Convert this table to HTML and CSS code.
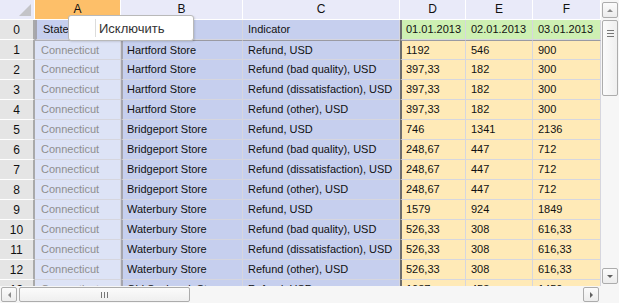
FILE: index.html
```html
<!DOCTYPE html>
<html lang="ru">
<head>
    <meta charset="UTF-8">
    <title>Таблица</title>
    <link rel="stylesheet" href="styles.css">
</head>
<body>
<div class="sheet">
    <div class="sheet-top">
        <div class="viewport">
            <div class="grid">
                <div class="corner"><span class="corner-mark"></span></div>
                <div class="col-head sel div-left">A</div>
                <div class="col-head div-left">B</div>
                <div class="col-head">C</div>
                <div class="col-head div-left">D</div>
                <div class="col-head">E</div>
                <div class="col-head">F</div>
            </div>
            <div class="grid" id="rows"></div>
            <div class="context-menu">
                <div class="menu-icon"></div>
                <div class="menu-text">Исключить</div>
            </div>
        </div>
        <div class="vscroll">
            <div class="sb-btn"><span class="arr up"></span></div>
            <div class="sb-thumb-v"><span class="grip-v"></span></div>
            <div class="sb-track"></div>
            <div class="sb-btn"><span class="arr down"></span></div>
        </div>
    </div>
    <div class="hscroll">
        <div class="sb-btn"><span class="arr left"></span></div>
        <div class="sb-thumb-h"><span class="grip-h"></span></div>
        <div class="sb-track"></div>
        <div class="sb-btn"><span class="arr right"></span></div>
        <div class="sb-corner"></div>
    </div>
</div>

<script>
    const data = [
        ['State', 'Store', 'Indicator', '01.01.2013', '02.01.2013', '03.01.2013'],
        ['Connecticut', 'Hartford Store', 'Refund, USD', '1192', '546', '900'],
        ['Connecticut', 'Hartford Store', 'Refund (bad quality), USD', '397,33', '182', '300'],
        ['Connecticut', 'Hartford Store', 'Refund (dissatisfaction), USD', '397,33', '182', '300'],
        ['Connecticut', 'Hartford Store', 'Refund (other), USD', '397,33', '182', '300'],
        ['Connecticut', 'Bridgeport Store', 'Refund, USD', '746', '1341', '2136'],
        ['Connecticut', 'Bridgeport Store', 'Refund (bad quality), USD', '248,67', '447', '712'],
        ['Connecticut', 'Bridgeport Store', 'Refund (dissatisfaction), USD', '248,67', '447', '712'],
        ['Connecticut', 'Bridgeport Store', 'Refund (other), USD', '248,67', '447', '712'],
        ['Connecticut', 'Waterbury Store', 'Refund, USD', '1579', '924', '1849'],
        ['Connecticut', 'Waterbury Store', 'Refund (bad quality), USD', '526,33', '308', '616,33'],
        ['Connecticut', 'Waterbury Store', 'Refund (dissatisfaction), USD', '526,33', '308', '616,33'],
        ['Connecticut', 'Waterbury Store', 'Refund (other), USD', '526,33', '308', '616,33'],
        ['Connecticut', 'Old Saybrook Store', 'Refund, USD', '1087', '453', '1450']
    ];

    const rows = document.getElementById('rows');
    data.forEach((row, i) => {
        const head = document.createElement('div');
        head.className = 'row-head';
        head.textContent = i;
        rows.appendChild(head);

        row.forEach((value, j) => {
            const cell = document.createElement('div');
            let cls = 'cell';
            if (i === 0) {
                cls += j < 3 ? ' title' : ' title-date';
            } else {
                cls += j === 0 ? ' dim' : (j < 3 ? ' attr' : ' num');
            }
            if (j === 0 || j === 1 || j === 3) cls += ' div-left';
            if (i === 1) cls += ' div-top';
            cell.className = cls;
            // в шапке столбец B пустой — меню его перекрывает
            cell.textContent = (i === 0 && j === 1) ? '' : value;
            rows.appendChild(cell);
        });
    });
</script>
</body>
</html>
```

FILE: styles.css
```css
* {
    margin: 0;
    padding: 0;
    box-sizing: border-box;
}

body {
    font-family: 'Liberation Sans', Arial, sans-serif;
    font-size: 11px;
    background: #ffffff;
    width: 619px;
    height: 303px;
    overflow: hidden;
}

.sheet {
    display: flex;
    flex-direction: column;
    height: 303px;
}

.sheet-top {
    display: flex;
    height: 286px;
}

.viewport {
    position: relative;
    width: 601px;
    overflow: hidden;
    background: #ffffff;
}

.grid {
    display: grid;
    grid-template-columns: 35px 86px 122px 157px 66px 67px 68px;
    grid-auto-rows: 20px;
}

.corner {
    position: relative;
    background: #e9eaf9;
    border-right: 1px solid #ffffff;
    border-bottom: 1px solid #ffffff;
}

.corner-mark {
    position: absolute;
    right: 3px;
    bottom: 3px;
    width: 0;
    height: 0;
    border-left: 12px solid transparent;
    border-bottom: 12px solid #c4c4c8;
}

.col-head {
    background: #e9eaf9;
    border-right: 1px solid #ffffff;
    border-bottom: 1px solid #ffffff;
    text-align: center;
    font-size: 12px;
    line-height: 19px;
    color: #111;
}

.col-head.sel {
    background: #fdbf69;
}

.row-head {
    background: #e5e5e5;
    border-bottom: 1px solid #ffffff;
    border-right: 2px solid #a9a9a9;
    text-align: center;
    font-size: 12px;
    line-height: 20px;
    color: #111;
}

.cell {
    border-right: 1px solid #d6d6de;
    border-bottom: 1px solid #d6d6de;
    padding: 0 0 0 5px;
    line-height: 19px;
    white-space: nowrap;
    overflow: hidden;
    color: #111;
}

.cell.title {
    background: #c6cfee;
}

.cell.title-date {
    background: #cef0b3;
}

.cell.dim {
    background: #dde3f6;
    color: #8e8e8e;
    padding-left: 6px;
}

.cell.attr {
    background: #c6cfee;
}

.cell.num {
    background: #ffeab7;
}

.cell.div-left {
    border-left: 2px solid #8c8c8c;
    padding-left: 4px;
}

.cell.dim.div-left {
    border-left: none;
    padding-left: 6px;
}

.cell.title.div-left {
    padding-left: 6px;
}

.cell.attr.div-left,
.cell.title.div-left {
    border-left: 2px solid #a5a5ad;
}

.cell.num.div-left,
.cell.title-date.div-left {
    border-left: 2px solid #6d6d6d;
}

.cell.div-top {
    border-top: 1px solid #9a9aa2;
}

.cell.dim.div-top {
    border-top-color: #b0b0b8;
}

.context-menu {
    position: absolute;
    left: 68px;
    top: 15px;
    width: 126px;
    height: 26px;
    display: flex;
    align-items: center;
    background: #ffffff;
    border: 1px solid #b9b9b9;
    border-radius: 3px;
    box-shadow: 1px 1px 2px rgba(0, 0, 0, 0.12);
}

.menu-icon {
    width: 27px;
    height: 18px;
    border-right: 1px solid #dcdcdc;
}

.menu-text {
    padding-left: 3px;
    font-size: 13px;
    color: #333;
}

/* полосы прокрутки */
.vscroll {
    width: 18px;
    display: flex;
    flex-direction: column;
    padding: 2px 1px 2px 1px;
    gap: 2px;
    background: #f6f6f6;
}

.hscroll {
    height: 17px;
    display: flex;
    padding: 1px 0 1px 1px;
    gap: 2px;
    background: #f6f6f6;
}

.sb-btn {
    width: 16px;
    height: 16px;
    flex: none;
    display: flex;
    align-items: center;
    justify-content: center;
    border: 1px solid #acacac;
    border-radius: 2px;
    background: linear-gradient(#fbfbfb, #ececec);
}

.hscroll .sb-btn {
    height: 15px;
}

.sb-track {
    flex: 1;
}

.sb-corner {
    width: 18px;
    flex: none;
}

.sb-thumb-v {
    height: 76px;
    display: flex;
    justify-content: center;
    padding-top: 9px;
    border: 1px solid #acacac;
    border-radius: 2px;
    background: linear-gradient(90deg, #fbfbfb, #efefef);
}

.grip-v {
    width: 7px;
    height: 7px;
    border-top: 1px solid #777;
    border-bottom: 1px solid #777;
    position: relative;
}

.grip-v::after {
    content: '';
    position: absolute;
    left: 0;
    right: 0;
    top: 2px;
    border-top: 1px solid #777;
}

.sb-thumb-h {
    width: 171px;
    display: flex;
    align-items: center;
    justify-content: center;
    border: 1px solid #acacac;
    border-radius: 2px;
    background: linear-gradient(#fbfbfb, #efefef);
}

.grip-h {
    position: relative;
    width: 7px;
    height: 6px;
    border-left: 1px solid #777;
    border-right: 1px solid #777;
}

.grip-h::after {
    content: '';
    position: absolute;
    top: 0;
    bottom: 0;
    left: 2px;
    border-left: 1px solid #777;
}

.arr {
    width: 0;
    height: 0;
}

.arr.up {
    border-left: 3px solid transparent;
    border-right: 3px solid transparent;
    border-bottom: 3px solid #8a8a8a;
}

.arr.down {
    border-left: 3px solid transparent;
    border-right: 3px solid transparent;
    border-top: 3px solid #606060;
}

.arr.left {
    border-top: 3px solid transparent;
    border-bottom: 3px solid transparent;
    border-right: 3px solid #8a8a8a;
}

.arr.right {
    border-top: 3px solid transparent;
    border-bottom: 3px solid transparent;
    border-left: 3px solid #606060;
}
```
